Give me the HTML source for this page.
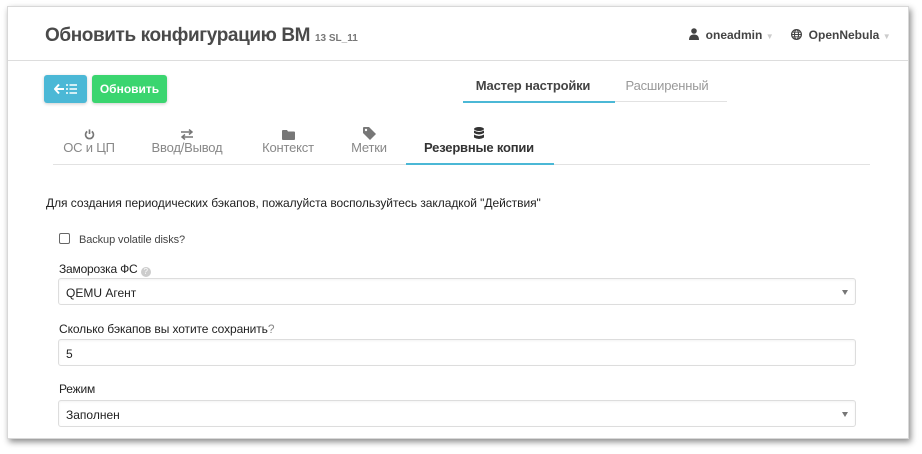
<!DOCTYPE html>
<html><head><meta charset="utf-8"><style>
*{box-sizing:border-box;margin:0;padding:0}
body{width:922px;height:454px;background:#fff;font-family:"Liberation Sans",sans-serif;position:relative;overflow:hidden;color:#333}
.panel{position:absolute;left:7px;top:6px;width:902px;height:433px;background:#fff;box-shadow:2px 3px 6px rgba(0,0,0,.45);border:1px solid #d8d8d8}
.abs{position:absolute}
.hdr{position:absolute;left:0;top:53px;width:100%;height:1px;background:#ddd}
h1{position:absolute;left:37px;top:18px;font-size:19px;font-weight:bold;color:#4a4a4a;letter-spacing:-.4px}
h1 small{font-size:10px;color:#777;font-weight:bold;letter-spacing:0}
.ut{font-size:12px;font-weight:bold;color:#444}
.car{color:#ccc;font-size:8px}
.btn{position:absolute;top:68px;height:28px;border-radius:3px;color:#fff;font-size:12px;font-weight:bold;display:flex;align-items:center;justify-content:center;box-shadow:0 1px 3px rgba(0,0,0,.2)}
.tab{position:absolute;top:119px;text-align:center;font-size:13px;color:#888;letter-spacing:-.2px}
.tab .ic{height:14px;display:flex;justify-content:center;align-items:flex-end}
.lbl{position:absolute;left:51px;font-size:12px;color:#222;letter-spacing:-.2px}
.inp{position:absolute;left:50px;width:798px;height:27px;border:1px solid #ddd;border-radius:3px;font-size:12px;color:#222;padding:7px 7px;box-shadow:inset 0 1px 2px rgba(0,0,0,.05)}
.arr{position:absolute;right:7px;top:11px;width:0;height:0;border-left:3.5px solid transparent;border-right:3.5px solid transparent;border-top:5px solid #777}
</style></head><body>
<div class="panel">
<h1>Обновить конфигурацию ВМ <small>13 SL_11</small></h1>
<div class="abs ut" style="left:681px;top:21px"><svg width="10" height="12" viewBox="0 0 10 12" style="vertical-align:-1px"><circle cx="5" cy="3" r="2.8" fill="#444"/><path d="M0 12 Q0 6.5 5 6.5 Q10 6.5 10 12Z" fill="#444"/></svg>&nbsp; oneadmin <span class="car">▼</span></div>
<div class="abs ut" style="left:783px;top:21px;font-weight:bold"><svg width="11" height="11" viewBox="0 0 12 12" style="vertical-align:-1px"><circle cx="6" cy="6" r="5.3" fill="none" stroke="#444" stroke-width="1.4"/><ellipse cx="6" cy="6" rx="2.2" ry="5.3" fill="none" stroke="#444" stroke-width="1.2"/><path d="M1 6H11M2 3.5H10M2 8.5H10" stroke="#444" stroke-width="1"/></svg>&nbsp; OpenNebula <span class="car">▼</span></div>
<div class="hdr"></div>
<div class="btn" style="left:36px;width:43px;background:#4bb8d6">
<svg width="24" height="12" viewBox="0 0 24 12"><path d="M1 6H10M5 1.5L1 6 5 10.5" stroke="#fff" stroke-width="2" fill="none"/><path d="M12 2h2M12 6h2M12 10h2M15.5 2H23M15.5 6H23M15.5 10H23" stroke="#fff" stroke-width="1.6"/></svg></div>
<div class="btn" style="left:84px;width:75px;background:#3ad56f">Обновить</div>
<div class="abs" style="left:452px;top:71px;width:146px;text-align:center;font-size:13px;font-weight:bold;color:#444;letter-spacing:-.2px">Мастер настройки</div>
<div class="abs" style="left:455px;top:94px;width:152px;height:2px;background:#4bb8d6"></div>
<div class="abs" style="left:603px;top:71px;width:112px;text-align:center;font-size:13px;color:#999;letter-spacing:-.2px">Расширенный</div>
<div class="abs" style="left:607px;top:94px;width:112px;height:1px;background:#e2e2e2"></div>

<div class="tab" style="left:41px;width:80px"><div class="ic"><svg width="11" height="12" viewBox="0 0 12 12"><path d="M3.5 3.2A4.3 4.3 0 1 0 8.5 3.2" fill="none" stroke="#777" stroke-width="1.8"/><path d="M6 1V6" stroke="#777" stroke-width="1.8"/></svg></div>ОС и ЦП</div>
<div class="tab" style="left:137px;width:84px"><div class="ic"><svg width="12" height="11" viewBox="0 0 12 11"><path d="M0 3H10M8 0.5L11 3 8 5.5M12 8H2M4 5.5L1 8 4 10.5" stroke="#777" stroke-width="1.5" fill="none"/></svg></div>Ввод/Вывод</div>
<div class="tab" style="left:245px;width:70px"><div class="ic"><svg width="13" height="10" viewBox="0 0 13 10"><path d="M0 1Q0 0 1 0H5L6 1.5H12Q13 1.5 13 2.5V9Q13 10 12 10H1Q0 10 0 9Z" fill="#777"/></svg></div>Контекст</div>
<div class="tab" style="left:333px;width:56px"><div class="ic"><svg width="13" height="13" viewBox="0 0 13 13"><path d="M0 1Q0 0 1 0H6L13 7 7 13 0 6Z" fill="#777"/><circle cx="3" cy="3" r="1.2" fill="#fff"/></svg></div>Метки</div>
<div class="tab" style="left:397px;width:148px;color:#333;font-weight:bold"><div class="ic"><svg width="10" height="13" viewBox="0 0 10 13"><ellipse cx="5" cy="2" rx="5" ry="2" fill="#333"/><path d="M0 3.5Q5 6.5 10 3.5V6Q5 9 0 6Z M0 7.5Q5 10.5 10 7.5V10.5Q5 13.5 0 10.5Z" fill="#333"/></svg></div>Резервные копии</div>
<div class="abs" style="left:45px;top:157px;width:817px;height:1px;background:#e2e2e2"></div>
<div class="abs" style="left:398px;top:156px;width:148px;height:2px;background:#4bb8d6"></div>

<div class="abs" style="left:38px;top:189px;font-size:12px;color:#222;letter-spacing:-.05px">Для создания периодических бэкапов, пожалуйста воспользуйтесь закладкой "Действия"</div>
<div class="abs" style="left:51px;top:226px;width:11px;height:11px;border:1px solid #666;border-radius:2px"></div>
<div class="abs" style="left:71px;top:227px;font-size:11px;color:#444;letter-spacing:-.1px">Backup volatile disks?</div>
<div class="lbl" style="top:255px">Заморозка ФС <span style="display:inline-block;width:10px;height:10px;border-radius:50%;background:#ccc;color:#fff;font-size:8px;text-align:center;line-height:10px;vertical-align:-1px">?</span></div>
<div class="inp" style="top:271px">QEMU Агент<div class="arr"></div></div>
<div class="lbl" style="top:315px;letter-spacing:-.1px">Сколько бэкапов вы хотите сохранить<span style="color:#888">?</span></div>
<div class="inp" style="top:332px">5</div>
<div class="lbl" style="top:375px">Режим</div>
<div class="inp" style="top:393px">Заполнен<div class="arr"></div></div>
</div>
</body></html>
